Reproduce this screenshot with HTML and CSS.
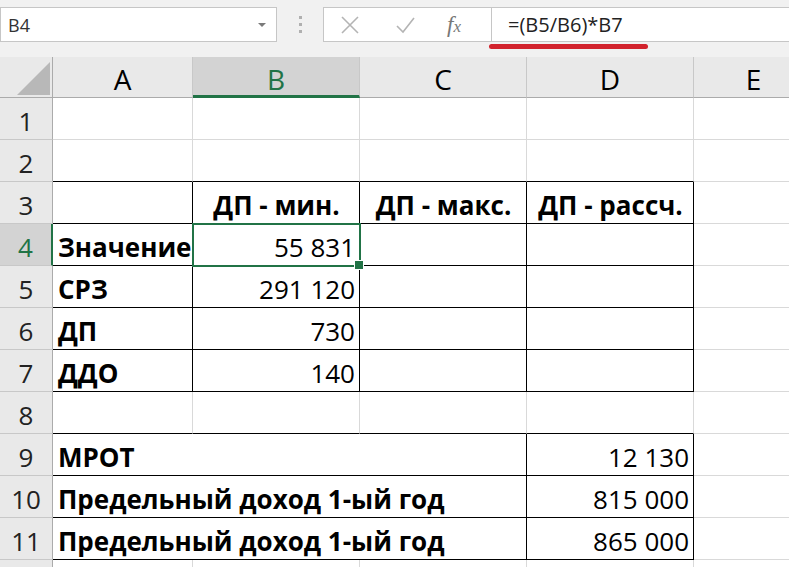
FILE: index.html
```html
<!DOCTYPE html>
<html lang="ru">
<head>
    <meta charset="UTF-8">
    <title>Книга1 - Excel</title>
    <link rel="stylesheet" href="styles.css">
</head>
<body>

    <!-- Formula bar -->
    <div class="formula-bar">
        <div class="name-box">
            <span>B4</span>
            <svg class="dropdown" width="10" height="6" viewBox="0 0 10 6"><path d="M1 1h8L5 5z" fill="#7a7a7a"/></svg>
        </div>
        <div class="grip"><i></i><i></i><i></i></div>
        <div class="fx-buttons">
            <svg width="22" height="22" viewBox="0 0 22 22"><path d="M3 3l16 16M19 3L3 19" stroke="#b4b4b4" stroke-width="1.6" fill="none"/></svg>
            <svg width="22" height="22" viewBox="0 0 22 22"><path d="M3 12l6 6L20 4" stroke="#b4b4b4" stroke-width="1.6" fill="none"/></svg>
            <span class="fx">f<sub>x</sub></span>
        </div>
        <div class="formula-box">
            <span class="formula">=(B5/B6)*B7</span>
            <div class="underline"></div>
        </div>
    </div>

    <!-- Worksheet grid -->
    <div class="sheet">
        <div class="corner"><div class="triangle"></div></div>
        <div class="ch">A</div>
        <div class="ch active">B</div>
        <div class="ch">C</div>
        <div class="ch">D</div>
        <div class="ch">E</div>

        <!-- row 1 -->
        <div class="rh">1</div>
        <div class="c"></div><div class="c"></div><div class="c"></div><div class="c"></div><div class="c"></div>

        <!-- row 2 -->
        <div class="rh">2</div>
        <div class="c b"></div><div class="c b"></div><div class="c b"></div><div class="c b"></div><div class="c"></div>

        <!-- row 3 -->
        <div class="rh">3</div>
        <div class="c r b"></div>
        <div class="c r b bold center">ДП - мин.</div>
        <div class="c r b bold center">ДП - макс.</div>
        <div class="c r b bold center">ДП - рассч.</div>
        <div class="c"></div>

        <!-- row 4 -->
        <div class="rh active">4</div>
        <div class="c r b bold">Значение</div>
        <div class="c r b num sel">55 831</div>
        <div class="c r b"></div>
        <div class="c r b"></div>
        <div class="c"></div>

        <!-- row 5 -->
        <div class="rh">5</div>
        <div class="c r b bold">СРЗ</div>
        <div class="c r b num">291 120</div>
        <div class="c r b"></div>
        <div class="c r b"></div>
        <div class="c"></div>

        <!-- row 6 -->
        <div class="rh">6</div>
        <div class="c r b bold">ДП</div>
        <div class="c r b num">730</div>
        <div class="c r b"></div>
        <div class="c r b"></div>
        <div class="c"></div>

        <!-- row 7 -->
        <div class="rh">7</div>
        <div class="c r b bold">ДДО</div>
        <div class="c r b num">140</div>
        <div class="c r b"></div>
        <div class="c r b"></div>
        <div class="c"></div>

        <!-- row 8 -->
        <div class="rh">8</div>
        <div class="c b"></div><div class="c b"></div><div class="c b"></div><div class="c b"></div><div class="c"></div>

        <!-- row 9 -->
        <div class="rh">9</div>
        <div class="c r b bold merged">МРОТ</div>
        <div class="c r b num">12 130</div>
        <div class="c"></div>

        <!-- row 10 -->
        <div class="rh">10</div>
        <div class="c r b bold merged">Предельный доход 1-ый год</div>
        <div class="c r b num">815 000</div>
        <div class="c"></div>

        <!-- row 11 -->
        <div class="rh">11</div>
        <div class="c r b bold merged">Предельный доход 1-ый год</div>
        <div class="c r b num">865 000</div>
        <div class="c"></div>

        <!-- row 12, only its top edge is in view -->
        <div class="rh"></div>
        <div class="c"></div><div class="c"></div><div class="c"></div><div class="c"></div><div class="c"></div>
    </div>

</body>
</html>
```

FILE: styles.css
```css
/* Page */
* {
    box-sizing: border-box;
}

body {
    margin: 0;
    width: 789px;
    height: 567px;
    overflow: hidden;
    background-color: #fff;
    font-family: "Open Sans", "Noto Sans", sans-serif;
    color: #000;
}

/* Formula bar */
.formula-bar {
    height: 57px;
    background-color: #f1f1f1;
    display: flex;
    align-items: flex-start;
    padding-top: 7px;
}

.name-box {
    width: 277px;
    height: 35px;
    background-color: #fff;
    border: 1px solid #c6c6c6;
    display: flex;
    align-items: center;
    justify-content: space-between;
    padding: 0 9px 0 7px;
    font-size: 18px;
    color: #333;
}

.grip {
    width: 46px;
    height: 35px;
    display: flex;
    flex-direction: column;
    align-items: center;
    justify-content: center;
    gap: 4px;
}

.grip i {
    width: 3px;
    height: 3px;
    background-color: #b0b0b0;
}

.fx-buttons {
    width: 168px;
    height: 35px;
    background-color: #fff;
    border: 1px solid #c6c6c6;
    border-right: none;
    display: flex;
    align-items: center;
    padding-left: 15px;
    gap: 33px;
}

.fx {
    font-family: "Liberation Serif", serif;
    font-style: italic;
    font-size: 23px;
    color: #777;
    margin-left: -2px;
}

.fx sub {
    font-size: 17px;
    vertical-align: 0;
}

.formula-box {
    flex: 1;
    height: 35px;
    background-color: #fff;
    border: 1px solid #c6c6c6;
    border-right: none;
    position: relative;
    padding-left: 16px;
    display: flex;
    align-items: center;
}

.formula {
    font-size: 20px;
    color: #222;
}

/* red marker under the formula */
.underline {
    position: absolute;
    left: -3px;
    top: 36px;
    width: 159px;
    height: 5px;
    border-radius: 3px;
    background-color: #d2232d;
}

/* Worksheet */
.sheet {
    display: grid;
    grid-template-columns: 53px 140px 167px 167px 167px 120px;
    grid-template-rows: 41px repeat(12, 42px);
}

.corner {
    background-color: #e9e9e9;
    border-right: 1px solid #ababab;
    border-bottom: 1px solid #ababab;
    position: relative;
}

.triangle {
    position: absolute;
    left: 17px;
    top: 5px;
    width: 33px;
    height: 33px;
    background-color: #b8b8b8;
    clip-path: polygon(100% 0, 100% 100%, 0 100%);
}

.ch {
    background-color: #e9e9e9;
    border-right: 1px solid #c8c8c8;
    border-bottom: 1px solid #ababab;
    font-size: 28px;
    display: flex;
    align-items: center;
    justify-content: center;
    padding-top: 3px;
}

.ch.active {
    background-color: #d3d3d3;
    color: #217346;
    border-bottom: 3px solid #217346;
    padding-top: 5px;
}

.rh {
    background-color: #e9e9e9;
    border-right: 1px solid #ababab;
    border-bottom: 1px solid #c8c8c8;
    font-size: 26px;
    color: #222;
    display: flex;
    align-items: flex-end;
    justify-content: center;
    padding-bottom: 0;
}

.rh.active {
    background-color: #d3d3d3;
    color: #217346;
    border-right: 2px solid #217346;
}

.c {
    border-right: 1px solid #d9d9d9;
    border-bottom: 1px solid #d9d9d9;
    font-size: 26px;
    display: flex;
    align-items: flex-end;
    padding: 0 4px 0 5px;
    white-space: nowrap;
}

/* black table borders */
.c.r {
    border-right-color: #000;
}

.c.b {
    border-bottom-color: #000;
}

.bold {
    font-weight: 700;
}

.num {
    justify-content: flex-end;
}

.center {
    justify-content: center;
}

.merged {
    grid-column: span 3;
}

/* selected cell B4 */
.sel {
    position: relative;
    z-index: 1;
    outline: 2px solid #217346;
    outline-offset: -1px;
}

.sel::after {
    content: "";
    position: absolute;
    right: -5px;
    bottom: -5px;
    width: 8px;
    height: 8px;
    background-color: #217346;
    border: 1px solid #fff;
}
```
